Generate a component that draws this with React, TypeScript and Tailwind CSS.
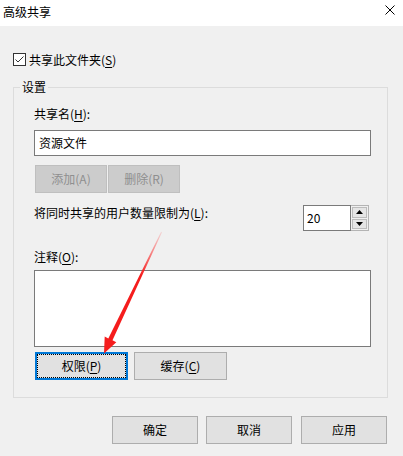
import React from "react";

function Btn({
  children,
  w,
  disabled,
  focused,
}: {
  children: React.ReactNode;
  w: string;
  disabled?: boolean;
  focused?: boolean;
}) {
  const base = "h-[28px] flex items-center justify-center shrink-0 ";
  let cls = "";
  if (disabled) cls = "bg-[#cccccc] border border-[#bfbfbf] text-[#8f8f8f]";
  else if (focused)
    cls =
      "bg-[#e1e1e1] border-2 border-[#0078d7] outline-1 outline-dotted outline-black outline-offset-[-3px]";
  else cls = "bg-[#e1e1e1] border border-[#adadad]";
  return <div className={base + w + " " + cls}>{children}</div>;
}

function U({ c }: { c: string }) {
  return <span className="underline underline-offset-[2px]">{c}</span>;
}

export default function App() {
  return (
    <div className="relative w-[403px] h-[456px] overflow-hidden bg-[#f0f0f0] font-['Noto_Sans_CJK_SC',sans-serif] text-[12px] leading-[16px] text-black">
      {/* title bar */}
      <div className="h-[26px] bg-white flex items-start justify-between pl-[3px] pr-[8px] pt-[4px]">
        <span>高级共享</span>
        <svg width="10" height="10" viewBox="0 0 10 10" className="mt-[1px]">
          <path d="M0.5 0.5 L9.5 9.5 M9.5 0.5 L0.5 9.5" stroke="#000" strokeWidth="1" fill="none" />
        </svg>
      </div>

      {/* checkbox */}
      <div className="mt-[27px] pl-[13px] flex items-center h-[13px]">
        <div className="w-[13px] h-[13px] border border-[#333333] bg-white shrink-0 flex items-center justify-center">
          <svg width="11" height="11" viewBox="0 0 11 11">
            <path d="M1.5 5.5 L4 8 L9.5 2.5" stroke="#333" strokeWidth="1" fill="none" />
          </svg>
        </div>
        <span className="ml-[3px]">
          共享此文件夹(<U c="S" />)
        </span>
      </div>

      {/* group */}
      <div className="relative mt-[21px] ml-[13px] w-[375px] h-[311px] border border-[#dcdcdc]">
        <span className="absolute left-[6px] top-[-9px] px-[2px] bg-[#f0f0f0]">设置</span>
        <div className="pl-[20px] pt-[18px] flex flex-col">
          <div>
            共享名(<U c="H" />):
          </div>
          <div className="mt-[8px] w-[337px] h-[26px] border border-[#7a7a7a] bg-white flex items-center pl-[4px]">
            资源文件
          </div>
          <div className="mt-[9px] ml-[1px] flex gap-[1px]">
            <Btn w="w-[72px]" disabled>
              添加(A)
            </Btn>
            <Btn w="w-[72px]" disabled>
              删除(R)
            </Btn>
          </div>
          <div className="mt-[12px] w-[336px] flex justify-between items-start">
            <div>
              将同时共享的用户数量限制为(<U c="L" />):
            </div>
            <div className="mr-[1px] flex h-[26px]">
              <div className="w-[48px] h-[26px] border border-[#7a7a7a] bg-white flex items-center pl-[3px]">
                20
              </div>
              <div className="w-[18px] h-[26px] border border-[#b4b4b4] border-l-0 bg-[#f0f0f0] flex flex-col p-[1px] gap-[1px]">
                <div className="flex-1 bg-[#e5e5e5] border border-[#bcbcbc] flex items-center justify-center">
                  <svg width="7" height="4" viewBox="0 0 7 4">
                    <path d="M3.5 0 L7 4 L0 4 Z" fill="#000" />
                  </svg>
                </div>
                <div className="flex-1 bg-[#e5e5e5] border border-[#bcbcbc] flex items-center justify-center">
                  <svg width="7" height="4" viewBox="0 0 7 4">
                    <path d="M0 0 L7 0 L3.5 4 Z" fill="#000" />
                  </svg>
                </div>
              </div>
            </div>
          </div>
          <div className="mt-[18px]">
            注释(<U c="O" />):
          </div>
          <div className="mt-[5px] w-[337px] h-[77px] border border-[#7a7a7a] bg-white" />
          <div className="mt-[5px] ml-[1px] flex gap-[6px]">
            <Btn w="w-[93px]" focused>
              权限(<U c="P" />)
            </Btn>
            <Btn w="w-[93px]">
              缓存(<U c="C" />)
            </Btn>
          </div>
        </div>
      </div>

      {/* bottom buttons */}
      <div className="mt-[18px] flex justify-end pr-[16px]">
        <Btn w="w-[86px]">确定</Btn>
        <div className="w-[8px]" />
        <Btn w="w-[86px]">取消</Btn>
        <div className="w-[9px]" />
        <Btn w="w-[86px]">应用</Btn>
      </div>

      {/* red arrow annotation */}
      <svg
        className="absolute left-0 top-0 pointer-events-none"
        width="403"
        height="456"
        viewBox="0 0 403 456"
      >
        <defs>
          <linearGradient id="ag" gradientUnits="userSpaceOnUse" x1="161.5" y1="232" x2="142" y2="276">
            <stop offset="0" stopColor="#ff3b3b" stopOpacity="0.15" />
            <stop offset="1" stopColor="#f51d1d" stopOpacity="1" />
          </linearGradient>
        </defs>
        <polygon
          points="162,232.2 112.5,340.3 116.3,342.2 104,353.5 104.7,336.6 108.3,338.5 161.1,231.8"
          fill="url(#ag)"
        />
      </svg>
    </div>
  );
}
